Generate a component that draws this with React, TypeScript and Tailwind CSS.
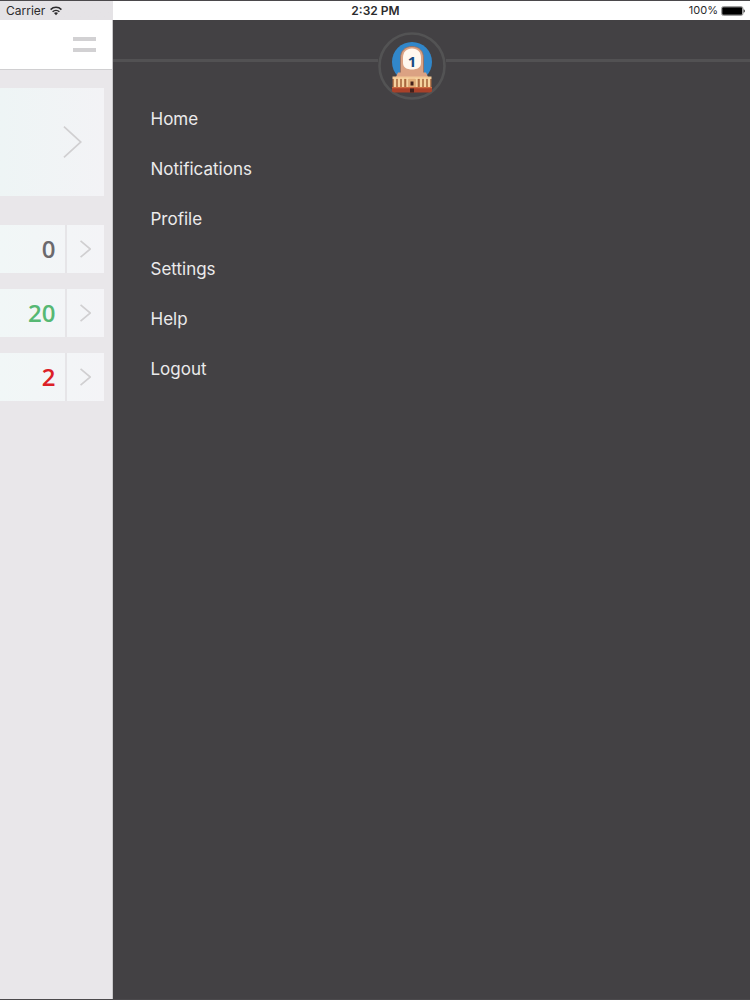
const menu = ['Home', 'Notifications', 'Profile', 'Settings', 'Help', 'Logout'];

const stats = [
  { value: 0, label: 'Open', color: 'text-[#6b696d]' },
  { value: 20, label: 'Completed', color: 'text-[#56b873]' },
  { value: 2, label: 'Missed', color: 'text-[#dc2027]' },
];

function WifiIcon() {
  return (
    <svg className="w-3 h-[10px]" viewBox="0 0 12 10" fill="none" stroke="#2c2b2d" strokeWidth="1.5">
      <path d="M0.6 3.6C3.6 0.6 8.4 0.6 11.4 3.6" />
      <path d="M2.6 5.8C4.5 4 7.5 4 9.4 5.8" />
      <path d="M6 9.2L4 7.1C5.2 6.1 6.8 6.1 8 7.1Z" fill="#2c2b2d" stroke="none" />
    </svg>
  );
}

function BatteryIcon() {
  return (
    <svg className="w-6 h-[10px]" viewBox="0 0 24 10">
      <rect x="0.5" y="0.5" width="21.5" height="9" rx="2" fill="#fff" stroke="#777" strokeWidth="0.7" />
      <rect x="1.2" y="1.2" width="20" height="7.6" rx="1" fill="#000" />
      <path d="M22.6 3.3C24.2 3.7 24.2 6.3 22.6 6.7Z" fill="#222" />
    </svg>
  );
}

function Chevron({ className }: { className: string }) {
  return (
    <svg className={className} viewBox="0 0 10 18" preserveAspectRatio="none" fill="none" stroke="#d0cfd1">
      <path d="M0.5 0.8L9.4 9L0.5 17.2" strokeWidth="1.7" vectorEffect="non-scaling-stroke" />
    </svg>
  );
}

function Logo() {
  return (
    <svg className="size-[68px] shrink-0" viewBox="0 0 68 68">
      <circle cx="34" cy="34" r="32.5" fill="#434144" stroke="#535354" strokeWidth="2.6" />
      <circle cx="34" cy="30" r="20" fill="#3187ca" />
      {/* dome */}
      <path d="M22.5 42V26C22.5 19 27 14.5 34 14.5S45.5 19 45.5 26V42Z" fill="#dba283" stroke="#9a6c58" strokeWidth="0.8" />
      <path d="M25 31V26C25 20 28.500 16.500 34 16.500S43 20 43 26V31C43 35.500 39 37.500 34 37.500S25 35.500 25 31Z" fill="#fff8ef" />
      <text x="34" y="35" textAnchor="middle" fontSize="15" fontWeight="700" fill="#174c84" fontFamily="Open Sans, sans-serif">1</text>
      {/* colonnade */}
      <path d="M20 40.500H48L50 45H18Z" fill="#dba283" />
      <path d="M14.500 44.500H53.500V47H14.500Z" fill="#f2c795" />
      <path d="M14.500 47H53.500V55.500H14.500Z" fill="#a8673e" />
      <path d="M17 46V55.500M21 46V55.500M25 46V55.500M29.500 46V55.500M38.500 46V55.500M43 46V55.500M47 46V55.500M51 46V55.500" stroke="#f5d3a0" strokeWidth="2.4" />
      <path d="M30.500 47H37.500V55.500H30.500Z" fill="#e0ad78" />
      <path d="M14 55H54V59.500L52 60.500H16L14 59.500Z" fill="#a94129" />
      <path d="M14 55H54V56.200H14Z" fill="#cf6d43" />
      <path d="M32.500 49.500H35.500V53.500H32.500ZM32 56.500H36V60.500H32Z" fill="#42201b" />
    </svg>
  );
}

export default function App() {
  return (
    <div className="min-h-screen flex flex-col bg-[#434144] border-y border-[#4b494c] font-['Inter',sans-serif]">
      {/* Status bar */}
      <header className="h-[19px] grid grid-cols-3 items-center pl-[6px] pr-[5px] bg-linear-to-r from-[#e5e3e6] from-15% to-white to-15% text-[11px] leading-none text-[#2c2b2d]">
        <div className="flex items-center gap-[5px]">
          <span className="text-xs leading-none">Carrier</span>
          <WifiIcon />
        </div>
        <span className="text-center text-xs leading-none font-semibold">2:32 PM</span>
        <div className="flex items-center justify-end gap-[3px]">
          <span>100%</span>
          <BatteryIcon />
        </div>
      </header>

      <div className="flex flex-1">
        {/* Visible edge of the dashboard */}
        <main className="w-[15%] bg-[#e9e7ea] border-r border-[#c9c8ca]">
          <div className="h-[50px] flex items-center justify-end pr-4 bg-white border-b border-[#d0cfd1]">
            <button type="button" aria-label="Menu" className="flex flex-col gap-[7px]">
              <span className="block w-[23px] h-1 bg-[#d2d1d3]" />
              <span className="block w-[23px] h-1 bg-[#d2d1d3]" />
            </button>
          </div>

          <div className="pr-2 pt-[18px]">
            <button
              type="button"
              aria-label="Details"
              className="w-full h-[108px] flex items-center justify-end pr-[22px] bg-linear-to-r from-[#eef5f5] to-[#f3f3f6]"
            >
              <Chevron className="w-[19px] h-[34px]" />
            </button>

            <ul className="mt-[29px] flex flex-col gap-4">
              {stats.map((stat) => (
                <li key={stat.label} className="h-12 flex bg-linear-to-r from-[#f1f7f7] to-[#f4f4f7]">
                  <span className={`flex-1 flex items-center justify-end pr-[9px] font-['Open_Sans',sans-serif] text-2xl font-semibold ${stat.color}`}>
                    {stat.value}
                  </span>
                  <button
                    type="button"
                    aria-label={stat.label}
                    className="w-[39px] flex items-center justify-center border-l-2 border-[#e6e5e8]"
                  >
                    <Chevron className="w-[11px] h-[18px]" />
                  </button>
                </li>
              ))}
            </ul>
          </div>
        </main>

        {/* Drawer */}
        <aside className="flex-1">
          <div className="flex items-start pt-3">
            <div className="flex-1 h-[3px] mt-[27px] bg-[#525153]" />
            <Logo />
            <div className="flex-1 h-[3px] mt-[27px] bg-[#525153]" />
            <div className="w-[38px] h-[3px] mt-[27px] bg-[#525153]" />
          </div>
          <nav className="pl-[38px] -mt-[5px]">
            <ul>
              {menu.map((item) => (
                <li key={item}>
                  <a href="#" className="h-[50px] flex items-center text-[17px] text-[#ebeaeb]">
                    {item}
                  </a>
                </li>
              ))}
            </ul>
          </nav>
        </aside>
      </div>
    </div>
  );
}
